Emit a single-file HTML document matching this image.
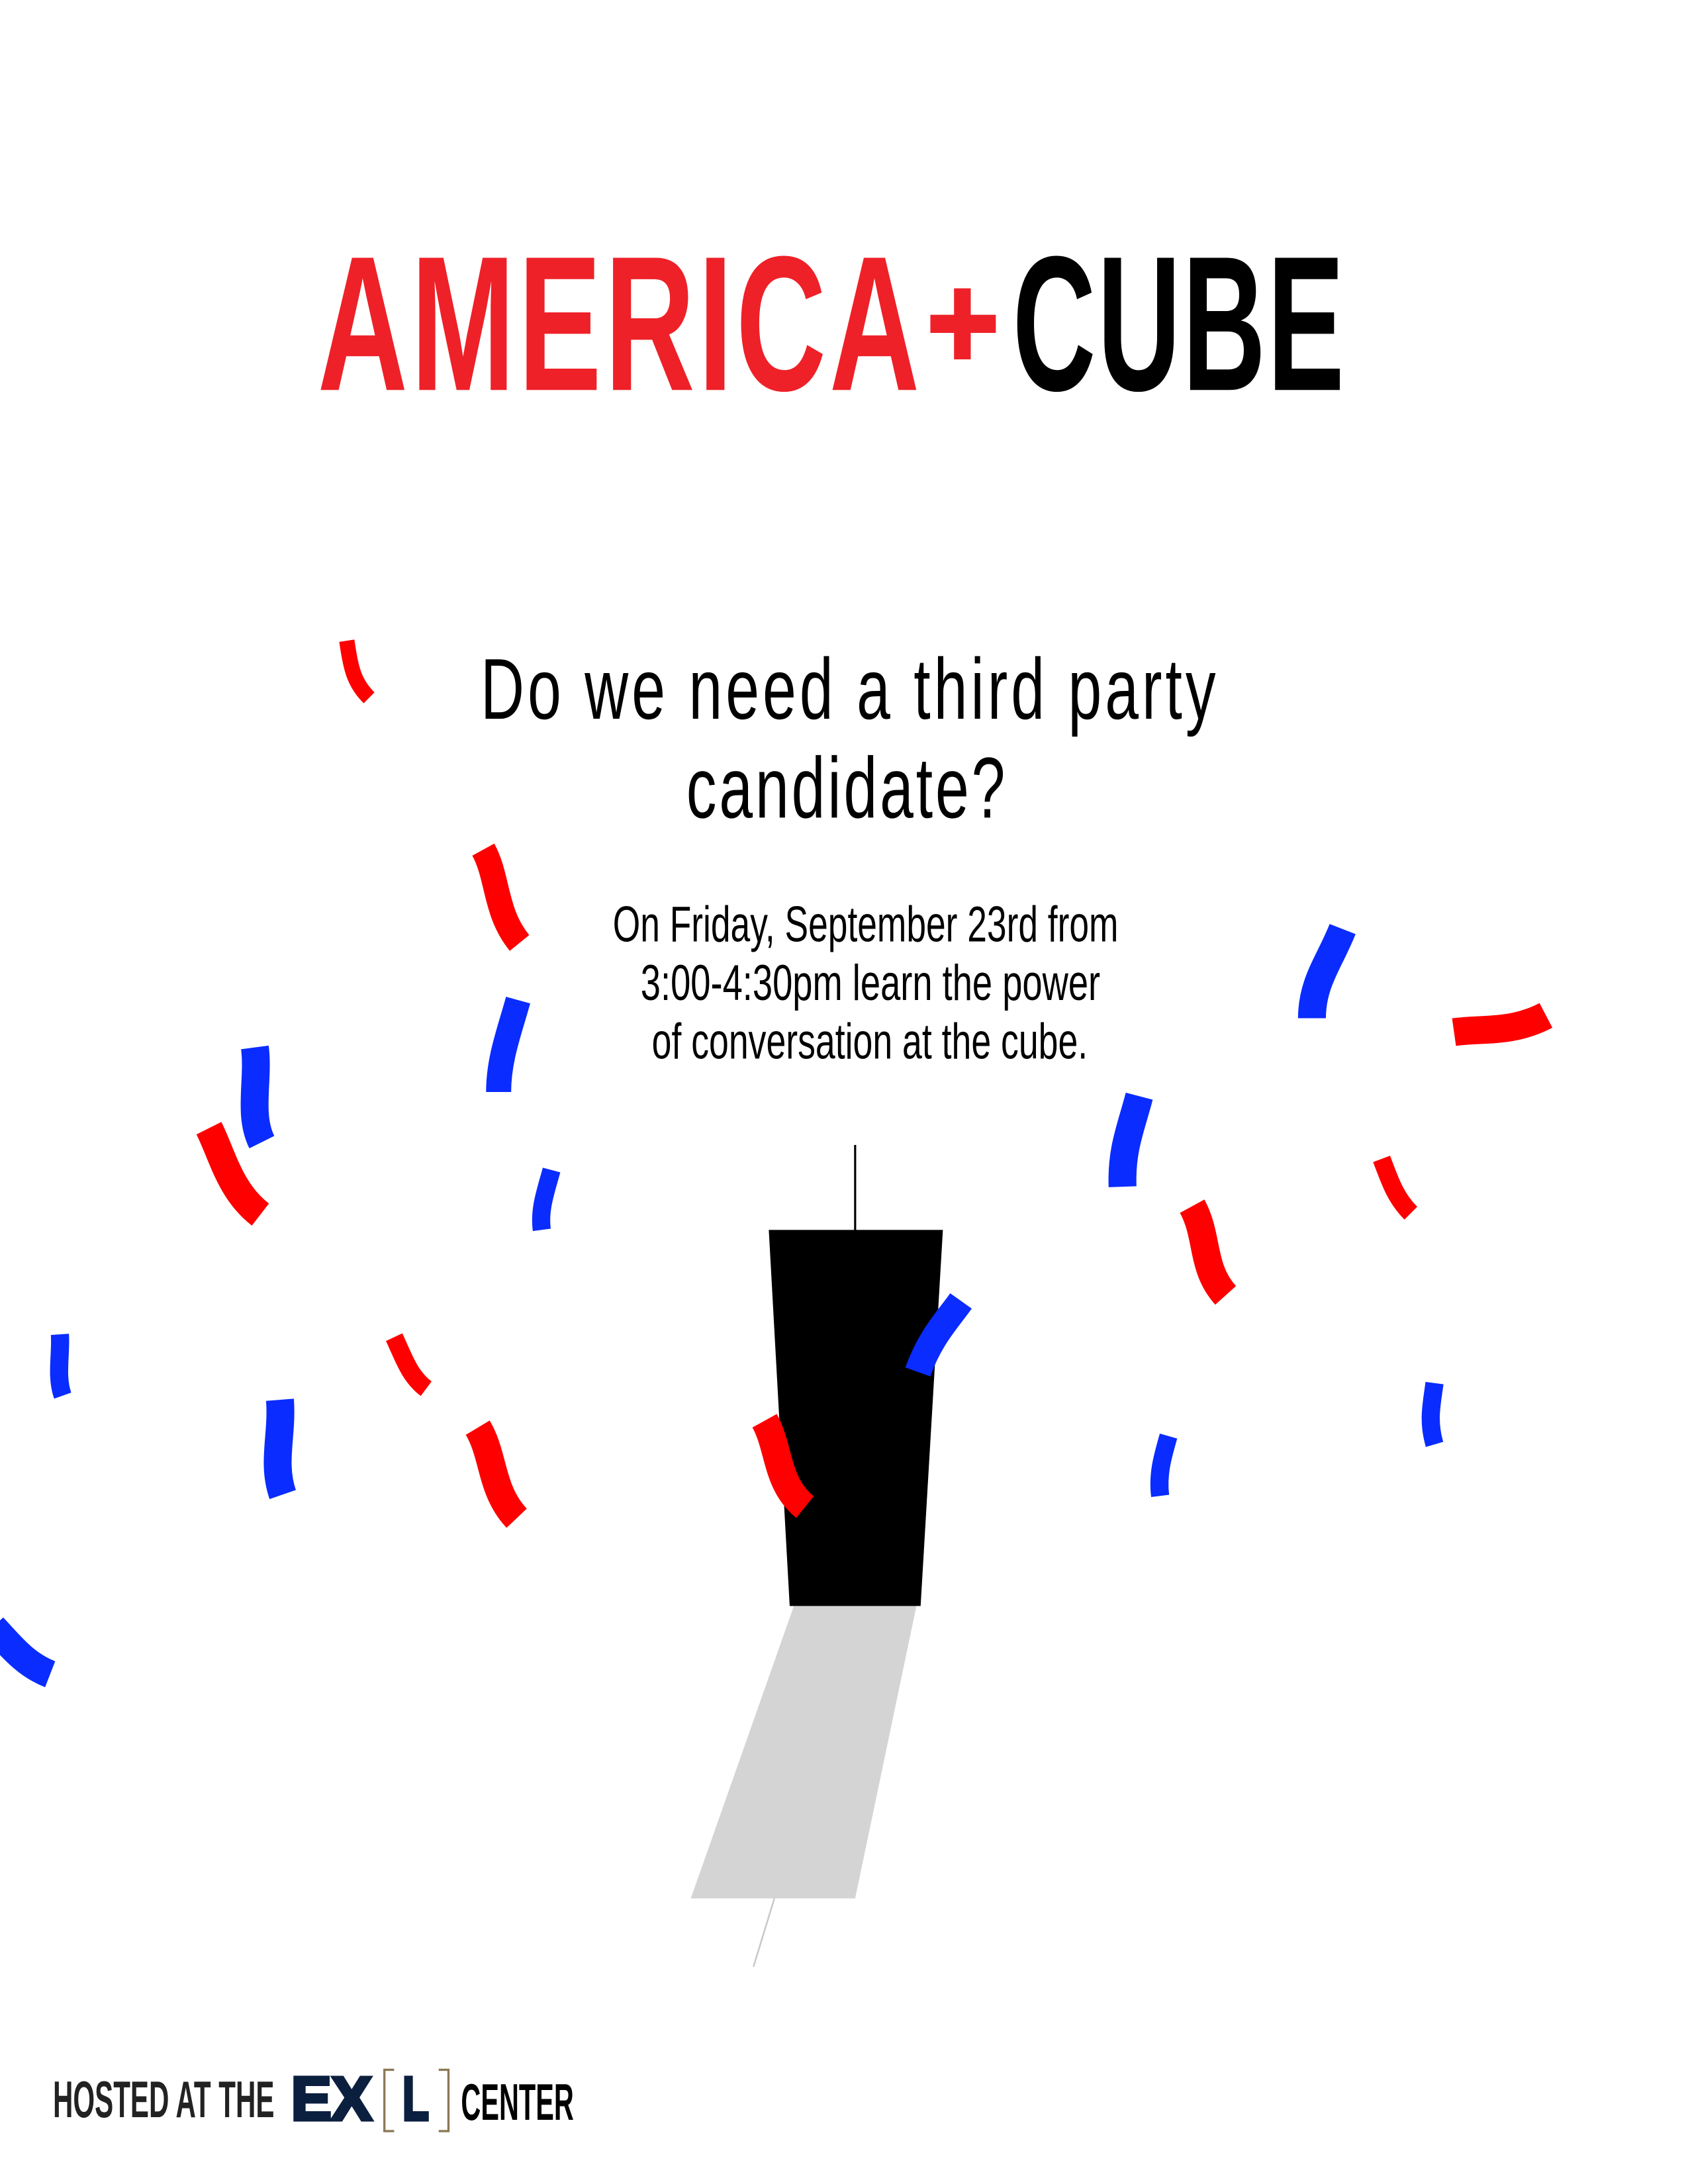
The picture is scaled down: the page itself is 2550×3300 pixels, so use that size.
<!DOCTYPE html>
<html><head><meta charset="utf-8"><style>
html,body{margin:0;padding:0;background:#fff;}
svg{display:block;}
</style></head><body>
<svg width="2550" height="3300" viewBox="0 0 1212 1568" preserveAspectRatio="none" xmlns="http://www.w3.org/2000/svg">
<rect width="1224" height="1584" fill="#fff"/>
<!-- title -->
<g font-family="'Liberation Sans Narrow','Liberation Sans',sans-serif" font-weight="bold" font-size="138" transform="scale(0.65,1)">
<text x="350.8" y="280" textLength="665" lengthAdjust="spacing" fill="#ee2128">AMERICA</text>
</g>
<g font-family="'Liberation Sans Narrow','Liberation Sans',sans-serif" font-weight="bold" font-size="138" transform="scale(0.6,1)">
<text x="1211.7" y="280" textLength="397" lengthAdjust="spacing" fill="#000">CUBE</text>
</g>
<rect x="668" y="226" width="47" height="13" fill="#ee2128"/>
<rect x="685" y="207" width="12" height="51" fill="#ee2128"/>
<!-- question -->
<g font-family="'Liberation Sans Narrow','Liberation Sans',sans-serif" font-size="62" fill="#000" transform="scale(0.7,1)">
<text x="493" y="516" textLength="754" lengthAdjust="spacing">Do we need a third party</text>
<text x="704" y="587" textLength="327" lengthAdjust="spacing">candidate?</text>
</g>
<g font-family="'Liberation Sans Narrow','Liberation Sans',sans-serif" font-size="36" fill="#000">
<text x="440" y="676" textLength="363" lengthAdjust="spacingAndGlyphs">On Friday, September 23rd from</text>
<text x="460" y="718" textLength="330" lengthAdjust="spacingAndGlyphs">3:00-4:30pm learn the power</text>
<text x="468" y="760" textLength="313" lengthAdjust="spacingAndGlyphs">of conversation at the cube.</text>
</g>
<!-- cube -->
<line x1="614" y1="822" x2="614" y2="884" stroke="#000" stroke-width="1.5"/>
<polygon points="570,1153 658,1153 614,1363 496,1363" fill="#d4d4d4"/>
<line x1="556" y1="1363" x2="541" y2="1412" stroke="#c8c8c8" stroke-width="1.2"/>
<polygon points="552,883 677,883 661,1153 567,1153" fill="#000"/>
<!-- confetti -->
<g fill="none" stroke-linecap="butt">
<path d="M249,460 C252,480 254,490 265,501" stroke="#ff0000" stroke-width="11"/>
<path d="M347,610 C358,630 355,655 373,677" stroke="#ff0000" stroke-width="18"/>
<path d="M372,718 C366,740 358,760 358,784" stroke="#0a2cff" stroke-width="18"/>
<path d="M183,752 C186,775 178,800 188,820" stroke="#0a2cff" stroke-width="20"/>
<path d="M150,810 C160,830 165,855 187,872" stroke="#ff0000" stroke-width="20"/>
<path d="M396,840 C392,855 387,868 389,883" stroke="#0a2cff" stroke-width="13"/>
<path d="M43,958 C44,972 40,988 45,1002" stroke="#0a2cff" stroke-width="13"/>
<path d="M283,960 C290,975 294,988 306,997" stroke="#ff0000" stroke-width="13"/>
<path d="M201,1005 C203,1030 195,1050 203,1073" stroke="#0a2cff" stroke-width="20"/>
<path d="M343,1025 C355,1045 352,1070 371,1090" stroke="#ff0000" stroke-width="20"/>
<path d="M-5,1168 C8,1182 18,1195 36,1202" stroke="#0a2cff" stroke-width="20"/>
<path d="M549,1020 C560,1040 557,1065 578,1082" stroke="#ff0000" stroke-width="20"/>
<path d="M690,934 C680,948 668,960 659,985" stroke="#0a2cff" stroke-width="19"/>
<path d="M964,667 C955,690 942,705 942,731" stroke="#0a2cff" stroke-width="20"/>
<path d="M1044,741 C1065,738 1085,742 1110,729" stroke="#ff0000" stroke-width="20"/>
<path d="M818,787 C812,810 805,825 806,852" stroke="#0a2cff" stroke-width="20"/>
<path d="M856,866 C868,888 862,910 880,930" stroke="#ff0000" stroke-width="20"/>
<path d="M992,832 C998,848 1002,860 1013,871" stroke="#ff0000" stroke-width="13"/>
<path d="M1030,993 C1028,1008 1025,1020 1030,1037" stroke="#0a2cff" stroke-width="13"/>
<path d="M839,1031 C835,1045 831,1058 833,1074" stroke="#0a2cff" stroke-width="13"/>
</g>
<!-- footer -->
<g font-family="'Liberation Sans Narrow','Liberation Sans',sans-serif" font-weight="bold" font-size="37">
<text x="38" y="1520" textLength="159" lengthAdjust="spacingAndGlyphs" fill="#222">HOSTED AT THE</text>
<text x="331" y="1522" textLength="81" lengthAdjust="spacingAndGlyphs" fill="#000">CENTER</text>
</g>
<g font-family="'Liberation Sans',sans-serif" font-weight="bold" font-size="44" fill="#0b1f3f" stroke="#0b1f3f" stroke-width="2.5">
<text x="209" y="1522" textLength="58" lengthAdjust="spacingAndGlyphs">EX</text>
<text x="289" y="1522" textLength="19" lengthAdjust="spacingAndGlyphs">L</text>
</g>
<path d="M283,1486 H276 V1530 H283 M315,1486 H322 V1530 H315" fill="none" stroke="#8b7a55" stroke-width="1.6"/>
</svg>
</body></html>
